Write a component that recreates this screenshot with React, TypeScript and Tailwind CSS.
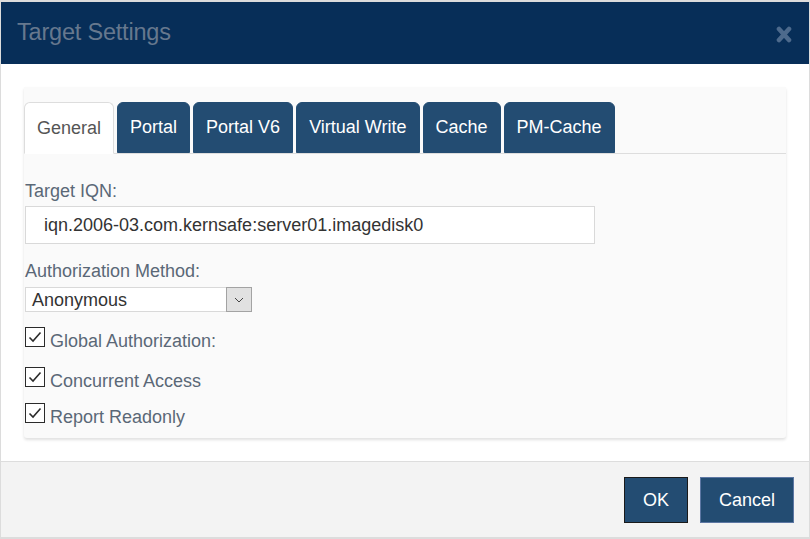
import React from 'react';

const font = { fontFamily: '"Liberation Sans", Arial, sans-serif' };

const CheckRow = ({ label, className }: { label: string; className: string }) => (
  <div className={`flex items-start ${className}`}>
    <span className="w-[20px] h-[20px] border-[1.5px] border-[#2b2b2b] bg-white flex items-center justify-center shrink-0">
      <svg width="14" height="12" viewBox="0 0 14 12">
        <path d="M1.5 6.5 L5 10 L12.5 1.5" fill="none" stroke="#2b2b2b" strokeWidth="1.6" />
      </svg>
    </span>
    <span className="ml-[5px] mt-[3px] text-[18px] leading-[22px] text-[#5a6877]">{label}</span>
  </div>
);

export default function App() {
  const tabs = ['Portal', 'Portal V6', 'Virtual Write', 'Cache', 'PM-Cache'];

  return (
    <div className="w-[810px] h-[539px] flex flex-col bg-white border-x border-t-2 border-b-2 border-[#dcdcdc]" style={font}>
      {/* Header */}
      <div className="h-[62px] shrink-0 bg-[#072e58] flex items-center justify-between pl-[16px] pr-[17px]">
        <h1 className="text-[23.5px] text-[#66788e] tracking-[-0.2px]">Target Settings</h1>
        <svg width="16" height="17" viewBox="0 0 16 17" className="mt-[3px]">
          <path d="M3 3 L13 14 M13 3 L3 14" stroke="#4d6a8c" strokeWidth="4.6" strokeLinecap="round" />
        </svg>
      </div>

      {/* Body */}
      <div className="flex-1 px-[23px] pt-[23px] pb-[23px]">
        <div className="bg-[#fafafa] h-full pt-[15px] shadow-[0_2px_3px_rgba(0,0,0,0.12)] rounded-b-[3px]">
          {/* Tabs */}
          <div className="flex items-end gap-[3px] border-b border-[#dddddd] h-[52px]">
            <div className="h-[52px] -mb-px px-[12px] flex items-center bg-white border border-[#dddddd] border-b-white rounded-t-[6px] text-[18px] text-[#555555]">
              General
            </div>
            {tabs.map((t) => (
              <div
                key={t}
                className="h-[51px] px-[12px] flex items-center bg-[#234c72] border border-[#234c72] rounded-t-[6px] text-[18px] text-white"
              >
                {t}
              </div>
            ))}
          </div>

          {/* Content */}
          <div className="pl-px">
            <div className="mt-[26px] text-[18px] leading-[22px] text-[#5a6877]">Target IQN:</div>
            <div className="mt-[4px] w-[570px] h-[38px] bg-white border border-[#d9d9d9] flex items-center pl-[18px] text-[18px] text-[#333333]">
              iqn.2006-03.com.kernsafe:server01.imagedisk0
            </div>

            <div className="mt-[16px] text-[18px] leading-[22px] text-[#5a6877]">Authorization Method:</div>
            <div className="mt-[5px] w-[227px] h-[25px] bg-white border border-[#d9d9d9] flex items-center">
              <span className="flex-1 pl-[6px] text-[18px] leading-[22px] text-[#333333]">Anonymous</span>
              <span className="w-[26px] h-[25px] -mr-px bg-[#e1e1e1] border border-[#a3a3a3] flex items-center justify-center">
                <svg width="10" height="6" viewBox="0 0 10 6">
                  <path d="M1 1 L5 5 L9 1" fill="none" stroke="#444444" strokeWidth="1" />
                </svg>
              </span>
            </div>

            <CheckRow label="Global Authorization:" className="mt-[15px]" />
            <CheckRow label="Concurrent Access" className="mt-[15px]" />
            <CheckRow label="Report Readonly" className="mt-[11px]" />
          </div>
        </div>
      </div>

      {/* Footer */}
      <div className="h-[76px] shrink-0 bg-[#f3f3f3] border-t border-[#dddddd] flex items-start justify-end gap-[12px] pt-[15px] pr-[15px]">
        <button className="w-[64px] h-[46px] bg-[#234c72] border-[1.5px] border-[#1a1a1a] text-white text-[18px]">OK</button>
        <button className="w-[94px] h-[46px] bg-[#234c72] border-[1.5px] border-[#5d77a3] text-white text-[18px]">Cancel</button>
      </div>
    </div>
  );
}
